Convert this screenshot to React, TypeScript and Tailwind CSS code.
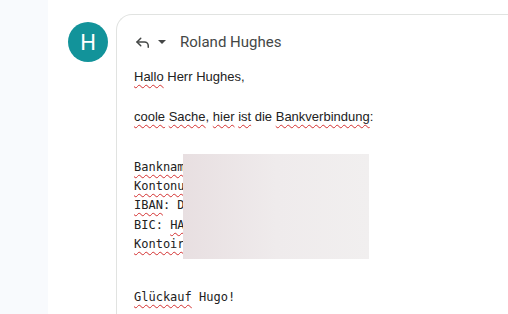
import React from "react";

const Squiggle = ({ children }: { children: React.ReactNode }) => (
  <span className="underline decoration-wavy decoration-[#d32f2f] decoration-1 underline-offset-[3px]">{children}</span>
);

const ReplyIcon = () => (
  <svg width="18" height="18" viewBox="0 0 24 24" fill="none" stroke="#444746" strokeWidth="2" strokeLinecap="round" strokeLinejoin="round">
    <path d="M9 7 4 12l5 5" />
    <path d="M4 12h10a5 5 0 0 1 5 5v2" />
  </svg>
);

const App = () => {
  const mono = "font-['DejaVu_Sans_Mono',monospace] text-[12px] leading-[19.2px]";

  return (
    <div className="w-[508px] h-[314px] flex bg-white overflow-hidden">
      <div className="w-[48px] h-full bg-[#f8fafd] shrink-0" />
      <div className="flex-1 flex pt-[14px]">
        <div className="w-[68px] shrink-0 flex justify-center pt-[8px] pl-[12px]">
          <div className="w-[40px] h-[40px] rounded-full bg-[#12939a] text-white flex items-center justify-center font-['Roboto',sans-serif] text-[22px]">
            H
          </div>
        </div>
        <div className="flex-1 border-l border-t border-[#e1e3e1] rounded-tl-[16px] pl-[17px] pt-[16px]">
          <div className="flex items-center h-[22px] text-[#444746] font-['Roboto',sans-serif]">
            <ReplyIcon />
            <svg width="10" height="10" viewBox="0 0 10 10" className="ml-[5px]">
              <path d="M1 3h8L5 7z" fill="#444746" />
            </svg>
            <span className="ml-[13px] text-[15px]">Roland Hughes</span>
          </div>
          <div className="mt-[14px] text-[13px] text-[#222] font-['Liberation_Sans',Arial,sans-serif] leading-[20px]">
            <div>
              <Squiggle>Hallo</Squiggle> Herr Hughes,
            </div>
            <div className="h-[20px]" />
            <div>
              <Squiggle>coole</Squiggle> <Squiggle>Sache</Squiggle>, <Squiggle>hier</Squiggle> <Squiggle>ist</Squiggle> die{" "}
              <Squiggle>Bankverbindung</Squiggle>:
            </div>
            <div className="h-[31px]" />
            <div className={`relative ${mono}`}>
              <div>
                <Squiggle>Banknam</Squiggle>
              </div>
              <div>
                <Squiggle>Kontonu</Squiggle>
              </div>
              <div>
                <Squiggle>IBAN</Squiggle>: D
              </div>
              <div>
                BIC: <Squiggle>HA</Squiggle>
              </div>
              <div>
                <Squiggle>Kontoir</Squiggle>
              </div>
              <div className="absolute left-[49px] top-[-4px] w-[186px] h-[105px] bg-gradient-to-r from-[#e8dfe1] via-[#efebec] to-[#f1efef]" />
            </div>
            <div className="h-[34px]" />
            <div className={mono}>
              <Squiggle>Glückauf</Squiggle> Hugo!
            </div>
          </div>
        </div>
      </div>
    </div>
  );
};

export default App;
